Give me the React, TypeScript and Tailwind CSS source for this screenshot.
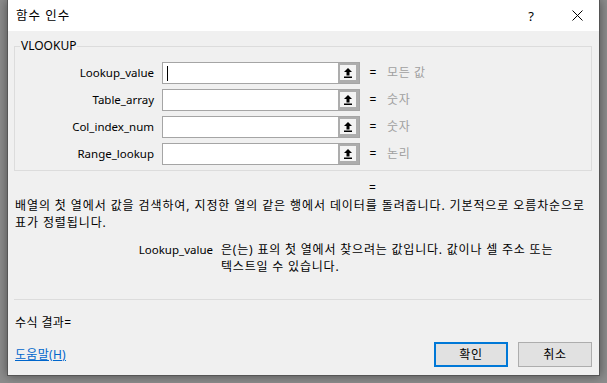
import React from 'react';

const font = { fontFamily: '"Noto Sans", "Noto Sans CJK KR", sans-serif' };

type Arg = { name: string; value: string; cursor?: boolean };

const args: Arg[] = [
  { name: 'Lookup_value', value: '모든 값', cursor: true },
  { name: 'Table_array', value: '숫자' },
  { name: 'Col_index_num', value: '숫자' },
  { name: 'Range_lookup', value: '논리' },
];

function RefIcon() {
  return (
    <svg width="10" height="12" viewBox="0 0 10 12">
      <polygon points="5,1 1,5 3.5,5 3.5,8.5 6.5,8.5 6.5,5 9,5" fill="#000" />
      <rect x="1" y="9.5" width="8" height="1.5" fill="#000" />
    </svg>
  );
}

function ArgRow({ arg }: { arg: Arg }) {
  return (
    <div className="flex h-[22px] items-center">
      <div className="w-[139px] text-right text-[11.5px] leading-[14px] text-black">{arg.name}</div>
      <div className="ml-[8px] flex h-[22px] w-[198px] border border-[#a5a5a5] bg-white">
        <div className="relative flex-1">
          {arg.cursor && <span className="absolute left-[4px] top-[3px] h-[15px] w-px bg-black" />}
        </div>
        <div className="flex w-[21px] items-center justify-center border-[3px] border-t-[2px] border-l-[2px] border-[#adadad] bg-[#f4f4f4]">
          <RefIcon />
        </div>
      </div>
      <span className="ml-[6px] w-[14px] text-center text-[12px] leading-[14px] text-black">=</span>
      <span className="ml-[7px] text-[12px] leading-[14px] tracking-[0.6px] text-[#a0a0a0]">{arg.value}</span>
    </div>
  );
}

export default function App() {
  return (
    <div className="h-[383px] w-[607px] overflow-hidden bg-[#8d8d8d]" style={font}>
      <div className="ml-[7px] flex h-[376px] w-[593px] flex-col border-x border-b border-[#555555] bg-[#f0f0f0] shadow-[0_0_10px_rgba(0,0,0,0.45)]">
        {/* title bar */}
        <div className="flex h-[31px] items-center bg-white pl-[8px]">
          <span className="text-[12.5px] leading-[14px] tracking-[1px] text-black">함수 인수</span>
          <span className="ml-auto text-[13px] leading-[14px] text-black">?</span>
          <svg className="ml-[38px] mr-[16px]" width="11" height="11" viewBox="0 0 11 11">
            <path d="M0.5 0.5 L10.5 10.5 M10.5 0.5 L0.5 10.5" stroke="#000" strokeWidth="1" />
          </svg>
        </div>

        <div className="flex flex-1 flex-col pl-[6px] pr-[7px]">
          <fieldset className="mt-[8px] border border-[#dcdcdc] pb-[5px] pt-[9px]">
            <legend className="ml-[5px] px-[1px] text-[12px] leading-[14px] text-black">VLOOKUP</legend>
            <div className="flex flex-col gap-[5px]">
              {args.map((a) => (
                <ArgRow key={a.name} arg={a} />
              ))}
            </div>
          </fieldset>

          <div className="mt-[10px] pl-[355px] text-[12px] leading-[14px] text-black">=</div>
          <p className="mt-[2px] whitespace-nowrap pl-[1px] text-[12px] leading-[17px] tracking-[0.9px] text-black">
            배열의 첫 열에서 값을 검색하여, 지정한 열의 같은 행에서 데이터를 돌려줍니다. 기본적으로 오름차순으로
            <br />
            표가 정렬됩니다.
          </p>

          <div className="mt-[10px] flex text-[12px] leading-[17px] text-black">
            <span className="w-[199px] text-right text-[11.5px]">Lookup_value</span>
            <p className="ml-[8px] whitespace-nowrap tracking-[0.8px]">
              은(는) 표의 첫 열에서 찾으려는 값입니다. 값이나 셀 주소 또는
              <br />
              텍스트일 수 있습니다.
            </p>
          </div>

          <div className="mt-[24px] h-px bg-[#dcdcdc]" />

          <div className="mt-[14px] pl-[1px] text-[12px] leading-[17px] tracking-[0.4px] text-black">수식 결과=</div>

          <div className="mt-[11px] flex items-center">
            <a className="pl-[1px] text-[12px] leading-[14px] tracking-[0.3px] text-[#0066cc] underline">도움말(H)</a>
            <button className="ml-auto h-[25px] w-[74px] border-2 border-[#0078d7] bg-[#e1e1e1] text-[12px] tracking-[0.8px] text-black">
              확인
            </button>
            <button className="ml-[10px] h-[25px] w-[74px] border border-[#adadad] bg-[#e1e1e1] text-[12px] tracking-[0.8px] text-black">
              취소
            </button>
          </div>
        </div>
      </div>
    </div>
  );
}
